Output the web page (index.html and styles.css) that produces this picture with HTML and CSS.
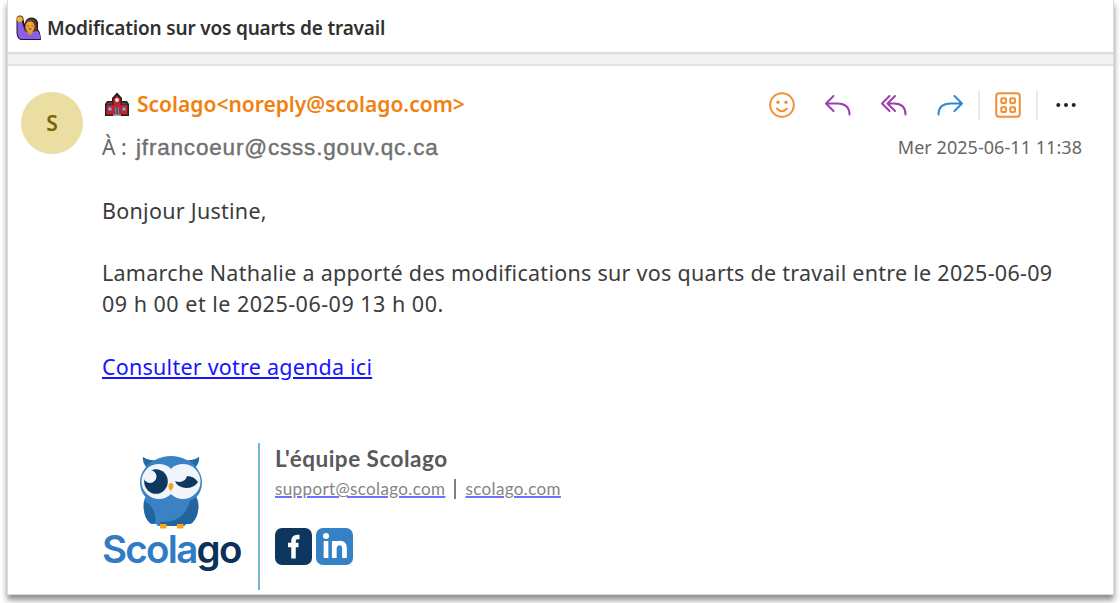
FILE: index.html
```html
<!DOCTYPE html>
<html lang="fr">
<head>
    <meta charset="UTF-8">
    <meta name="viewport" content="width=device-width, initial-scale=1.0">
    <title>Modification sur vos quarts de travail</title>
    <link rel="stylesheet" href="styles.css">
</head>
<body>

    <div class="window">
        <div class="subject-bar">
            <svg class="subject-icon" width="26" height="26" viewBox="0 0 26 26">
                <path d="M1.500 4q0-3.500 3.500-3.500t3.500 3.500l1 5q1.500-6.500 6.500-6.500 5.500 0 7 5v7q2.500 2 3 10.500H6Q2 24 1.500 18z" fill="#1b1838"/>
                <path d="M2.500 7h4.500l2.500 8h11q4.500 1 5 9H6Q3 23 2.500 18z" fill="#8a60e4"/>
                <circle cx="4.800" cy="4.200" r="3" fill="#f0b429"/>
                <path d="M9.500 16.500q0-13 6.500-13t6 13z" fill="#6b3a1e"/>
                <path d="M12.500 15h5v3q-2.500 4-5 0z" fill="#d9952a"/>
                <ellipse cx="15" cy="11.500" rx="4.500" ry="5.300" fill="#eba937"/>
                <path d="M12.500 11h1.300M16.500 11h1.300M13.500 14h3" stroke="#6b3a1e" stroke-width="1"/>
            </svg>
            <span class="subject">Modification sur vos quarts de travail</span>
        </div>

        <div class="message">
            <div class="avatar">S</div>
            <div class="content">
                <div class="header-row">
                    <div class="sender">
                        <svg width="26" height="26" viewBox="0 0 26 26">
                            <path d="M1 24V12l2-3h5V6l5-5.500L18 6v3h5l2 3v12z" fill="#241f22"/>
                            <path d="M2.500 13h7V7L13 3.500 16.500 7v6h7v9.500h-21z" fill="#c5202b"/>
                            <path d="M3.500 10.500h5v2h-6zM17.500 10.500h5l1 2h-6z" fill="#55464b"/>
                            <circle cx="13" cy="8" r="1.900" fill="#eee"/>
                            <path d="M4.500 15.500h3v3h-3zM18.500 15.500h3v3h-3z" fill="#58c3ef"/>
                            <path d="M11 15h4v7.500h-4z" fill="#3f91c0"/>
                            <path d="M13 15v7" stroke="#7b1922" stroke-width="1"/>
                            <path d="M9 22.500h8v1.500H9z" fill="#aaa"/>
                        </svg>
                        <span class="sender-name">Scolago&lt;noreply@scolago.com&gt;</span>
                    </div>
                    <div class="actions">
                        <svg class="orange" width="26" height="26" viewBox="0 0 26 26">
                            <circle cx="13" cy="13" r="11.800"/>
                            <path d="M8 16.500q5 5.500 10 0"/>
                            <circle class="dot" cx="9" cy="10.300" r="1.700"/>
                            <circle class="dot" cx="17" cy="10.300" r="1.700"/>
                        </svg>
                        <svg class="purple" width="26" height="26" viewBox="0 0 26 26">
                            <path d="M8.500 4 1 11.500 8.500 19M1.500 11.500H12q12.500 0 12.500 11"/>
                        </svg>
                        <svg class="purple" width="26" height="26" viewBox="0 0 26 26">
                            <path d="M8.500 4 1 11.500 8.500 19M14 4 6.500 11.500 14 19M7 11.500h6q11.500 0 11.500 11"/>
                        </svg>
                        <svg class="blue" width="26" height="26" viewBox="0 0 26 26">
                            <path d="M17.500 4 25 11.500 17.500 19M24.500 11.500H14q-12.500 0-12.500 11"/>
                        </svg>
                        <span class="divider"></span>
                        <svg class="orange apps" width="26" height="26" viewBox="0 0 26 26">
                            <rect x="1.200" y="1.200" width="23.600" height="23.600" rx="3"/>
                            <rect x="6.300" y="6.300" width="4.800" height="4.800" rx="1"/>
                            <rect x="15.200" y="6.300" width="4.800" height="4.800" rx="1"/>
                            <rect x="6.300" y="15.200" width="4.800" height="4.800" rx="1"/>
                            <rect x="15.200" y="15.200" width="4.800" height="4.800" rx="1"/>
                        </svg>
                        <span class="divider"></span>
                        <svg class="more" width="20" height="6" viewBox="0 0 20 6">
                            <circle cx="2.300" cy="3" r="2"/>
                            <circle cx="10" cy="3" r="2"/>
                            <circle cx="17.700" cy="3" r="2"/>
                        </svg>
                    </div>
                </div>

                <div class="recipient-row">
                    <div><span class="to">À :</span><span class="address">jfrancoeur@csss.gouv.qc.ca</span></div>
                    <span class="date">Mer 2025-06-11 11:38</span>
                </div>

                <div class="body-text">
                    <p>Bonjour Justine,</p>
                    <p>Lamarche Nathalie a apporté des modifications sur vos quarts de travail entre le 2025-06-09<br><span class="hours">09 h 00 et le 2025-06-09 13 h 00.</span></p>
                    <p><a class="agenda" href="#">Consulter votre agenda ici</a></p>
                </div>

                <div class="signature">
                    <div class="logo">
                        <svg width="66" height="75" viewBox="0 0 66 75">
                            <!-- body and wings -->
                            <path d="M9 39q-5 8-3 17 1 8 6 12l2 1h4l2 2h26l2-2h4l2-1q5-4 6-12 2-9-3-17z" fill="#3a82c4"/>
                            <path d="M6.500 46q12 7 11 22l-3.500 1-2-1Q4 60 6.500 46zM52 43l6-1q6 14-4 26l-2 1h-4l-2 2H25l-4-4q28 1 31-24z" fill="#22649c"/>
                            <!-- head and ears -->
                            <path d="M5 2q5 4 12 3 16-8 32 0 7 1 12-3 1 5-3 10 6 8 6 15 0 14-12 19H14Q2 41 2 27q0-8 6-15-4-5-3-10z" fill="#3a82c4"/>
                            <path d="M5 2q5 4 11 3l-8 6q-3-4-3-9zM61 2q-5 4-11 3l8 6q3-4 3-9z" fill="#2468a0"/>
                            <circle cx="21" cy="26.500" r="17.500" fill="#f1f4fb"/>
                            <circle cx="45" cy="26.500" r="17.500" fill="#f1f4fb"/>
                            <ellipse cx="18" cy="26.500" rx="11.800" ry="12.300" fill="#0d3860"/>
                            <circle cx="12" cy="21.500" r="6.500" fill="#f1f4fb"/>
                            <path d="M37 26q4 2 8 0 3-1 4-5 7 0 11 6-4 6-12 6-9-1-11-7z" fill="#0d3860"/>
                            <path d="M33 28q2.500 0 2.500 3.500L33 36q-2.500-1.500-2.500-4.500Q30.500 28 33 28z" fill="#f7a11b"/>
                            <path d="M22 69h6.500v4.500H22zM39 69h6.500v4.500H39z" fill="#fba518"/>
                        </svg>
                        <div class="logo-text">Scola<span>go</span></div>
                    </div>
                    <div class="team">
                        <div class="team-name">L'équipe Scolago</div>
                        <div class="contacts">
                            <a href="#">support@scolago.com</a>
                            <span class="bar"></span>
                            <a href="#">scolago.com</a>
                        </div>
                        <div class="socials">
                            <svg width="37" height="37" viewBox="0 0 37 37">
                                <rect width="37" height="37" rx="7" fill="#0e3760"/>
                                <path d="M24.500 9h-2q-4 0-4 4.500V30.500M13 17h10.500" fill="none" stroke="#fff" stroke-width="4.500"/>
                            </svg>
                            <svg width="37" height="37" viewBox="0 0 37 37">
                                <rect width="37" height="37" rx="7" fill="#3581c5"/>
                                <circle cx="10" cy="8" r="3" fill="#fff"/>
                                <path d="M10 13v17M18.300 30V13M18.300 20q1-5 5.500-5t4.700 5v10" fill="none" stroke="#fff" stroke-width="4.700"/>
                            </svg>
                        </div>
                    </div>
                </div>
            </div>
        </div>
    </div>

</body>
</html>
```
FILE: styles.css
```css
* {
    box-sizing: border-box;
}

body {
    font-family: "Noto Sans", "Open Sans", sans-serif;
    margin: 0;
    padding: 0 6px 8px 7px;
    height: 603px;
    overflow: hidden;
    background: white;
    color: #3c3c3c;
}

svg {
    display: block;
    flex: none;
}

.window {
    height: 595px;
    background: white;
    border: 1px solid #dcdcdc;
    border-top: none;
    box-shadow: 0 5px 6px 0 #8c8c8c;
}

.subject-bar {
    height: 66px;
    display: flex;
    align-items: center;
    gap: 6px;
    padding: 0 0 10px 7px;
    background: linear-gradient(white 52px, #d8d8d8 52px, #dedede 54px, #f3f3f3 55px, #f3f3f3 64px, #e2e2e2 64px);
}

.subject {
    font-size: 19px;
    font-weight: 600;
    color: #303030;
    letter-spacing: -0.18px;
    white-space: nowrap;
}

.message {
    display: flex;
    padding: 22px 31px 0 13px;
}

.avatar {
    width: 62px;
    height: 62px;
    margin-top: 4px;
    border-radius: 50%;
    background: #eadea3;
    color: #796406;
    font-size: 21px;
    font-weight: 600;
    line-height: 62px;
    text-align: center;
    flex: none;
}

.content {
    flex: 1;
    margin-left: 19px;
    white-space: nowrap;
}

.header-row {
    height: 34px;
    display: flex;
    justify-content: space-between;
    align-items: center;
}

.sender {
    display: flex;
    align-items: center;
    gap: 7px;
    padding-left: 2px;
}

.sender-name {
    position: relative;
    top: -1px;
    color: #f08010;
    font-size: 21px;
    font-weight: 600;
}

.actions {
    display: flex;
    align-items: center;
    padding-right: 6px;
}

.actions svg {
    fill: none;
    stroke-width: 2;
    stroke-linecap: round;
    stroke-linejoin: round;
    margin-right: 30px;
}

.actions .orange {
    stroke: #f29036;
}

.actions .purple {
    stroke: #9c3eaf;
}

.actions .blue {
    stroke: #2b88d8;
    margin-right: 15px;
}

.actions .dot {
    fill: #f29036;
    stroke: none;
}

.divider {
    width: 2px;
    height: 29px;
    background: #e8e8e8;
    margin-right: 15px;
}

.actions .apps {
    margin-right: 15px;
}

.actions .more {
    fill: #222;
    margin: 0 0 0 3px;
}

.recipient-row {
    height: 50px;
    display: flex;
    justify-content: space-between;
    align-items: center;
    color: #666;
}

.to {
    display: inline-block;
    width: 34px;
    font-size: 21px;
}

.address {
    font-family: "Liberation Sans", Arial, sans-serif;
    font-size: 22.5px;
    letter-spacing: 0.82px;
    color: #707070;
    -webkit-text-stroke: 0.4px #707070;
}

.date {
    font-size: 18px;
    letter-spacing: 0.05px;
}

.body-text {
    font-size: 21.5px;
    line-height: 31.2px;
    letter-spacing: 0.27px;
    margin-top: 23px;
}

.body-text p {
    margin: 0 0 31px;
}

.hours {
    letter-spacing: 0.5px;
}

.agenda {
    color: #1414ff;
    letter-spacing: 0.23px;
    text-underline-offset: 2px;
}

.signature {
    display: flex;
    margin-top: 61px;
}

.logo {
    width: 158px;
    height: 147px;
    padding-top: 12px;
    border-right: 2px solid #75b5d5;
}

.logo svg {
    margin-left: 36px;
}

.logo-text {
    font-family: Inter, sans-serif;
    font-size: 38.5px;
    font-weight: 600;
    line-height: 38px;
    letter-spacing: -1.7px;
    color: #307bc4;
}

.logo-text span {
    color: #0b3158;
}

.team {
    margin-left: 15px;
    font-family: Lato, sans-serif;
}

.team-name {
    font-size: 22.5px;
    font-weight: bold;
    line-height: 32px;
    letter-spacing: 0.5px;
    color: #595959;
}

.contacts {
    display: flex;
    align-items: center;
    gap: 9px;
    height: 28px;
    font-size: 17px;
    letter-spacing: 0.37px;
}

.contacts a {
    color: #858585;
    text-decoration-color: #7070ff;
    text-decoration-thickness: 2px;
}

.bar {
    width: 2px;
    height: 20px;
    background: #808080;
}

.socials {
    display: flex;
    gap: 4px;
    margin-top: 25px;
}
```
